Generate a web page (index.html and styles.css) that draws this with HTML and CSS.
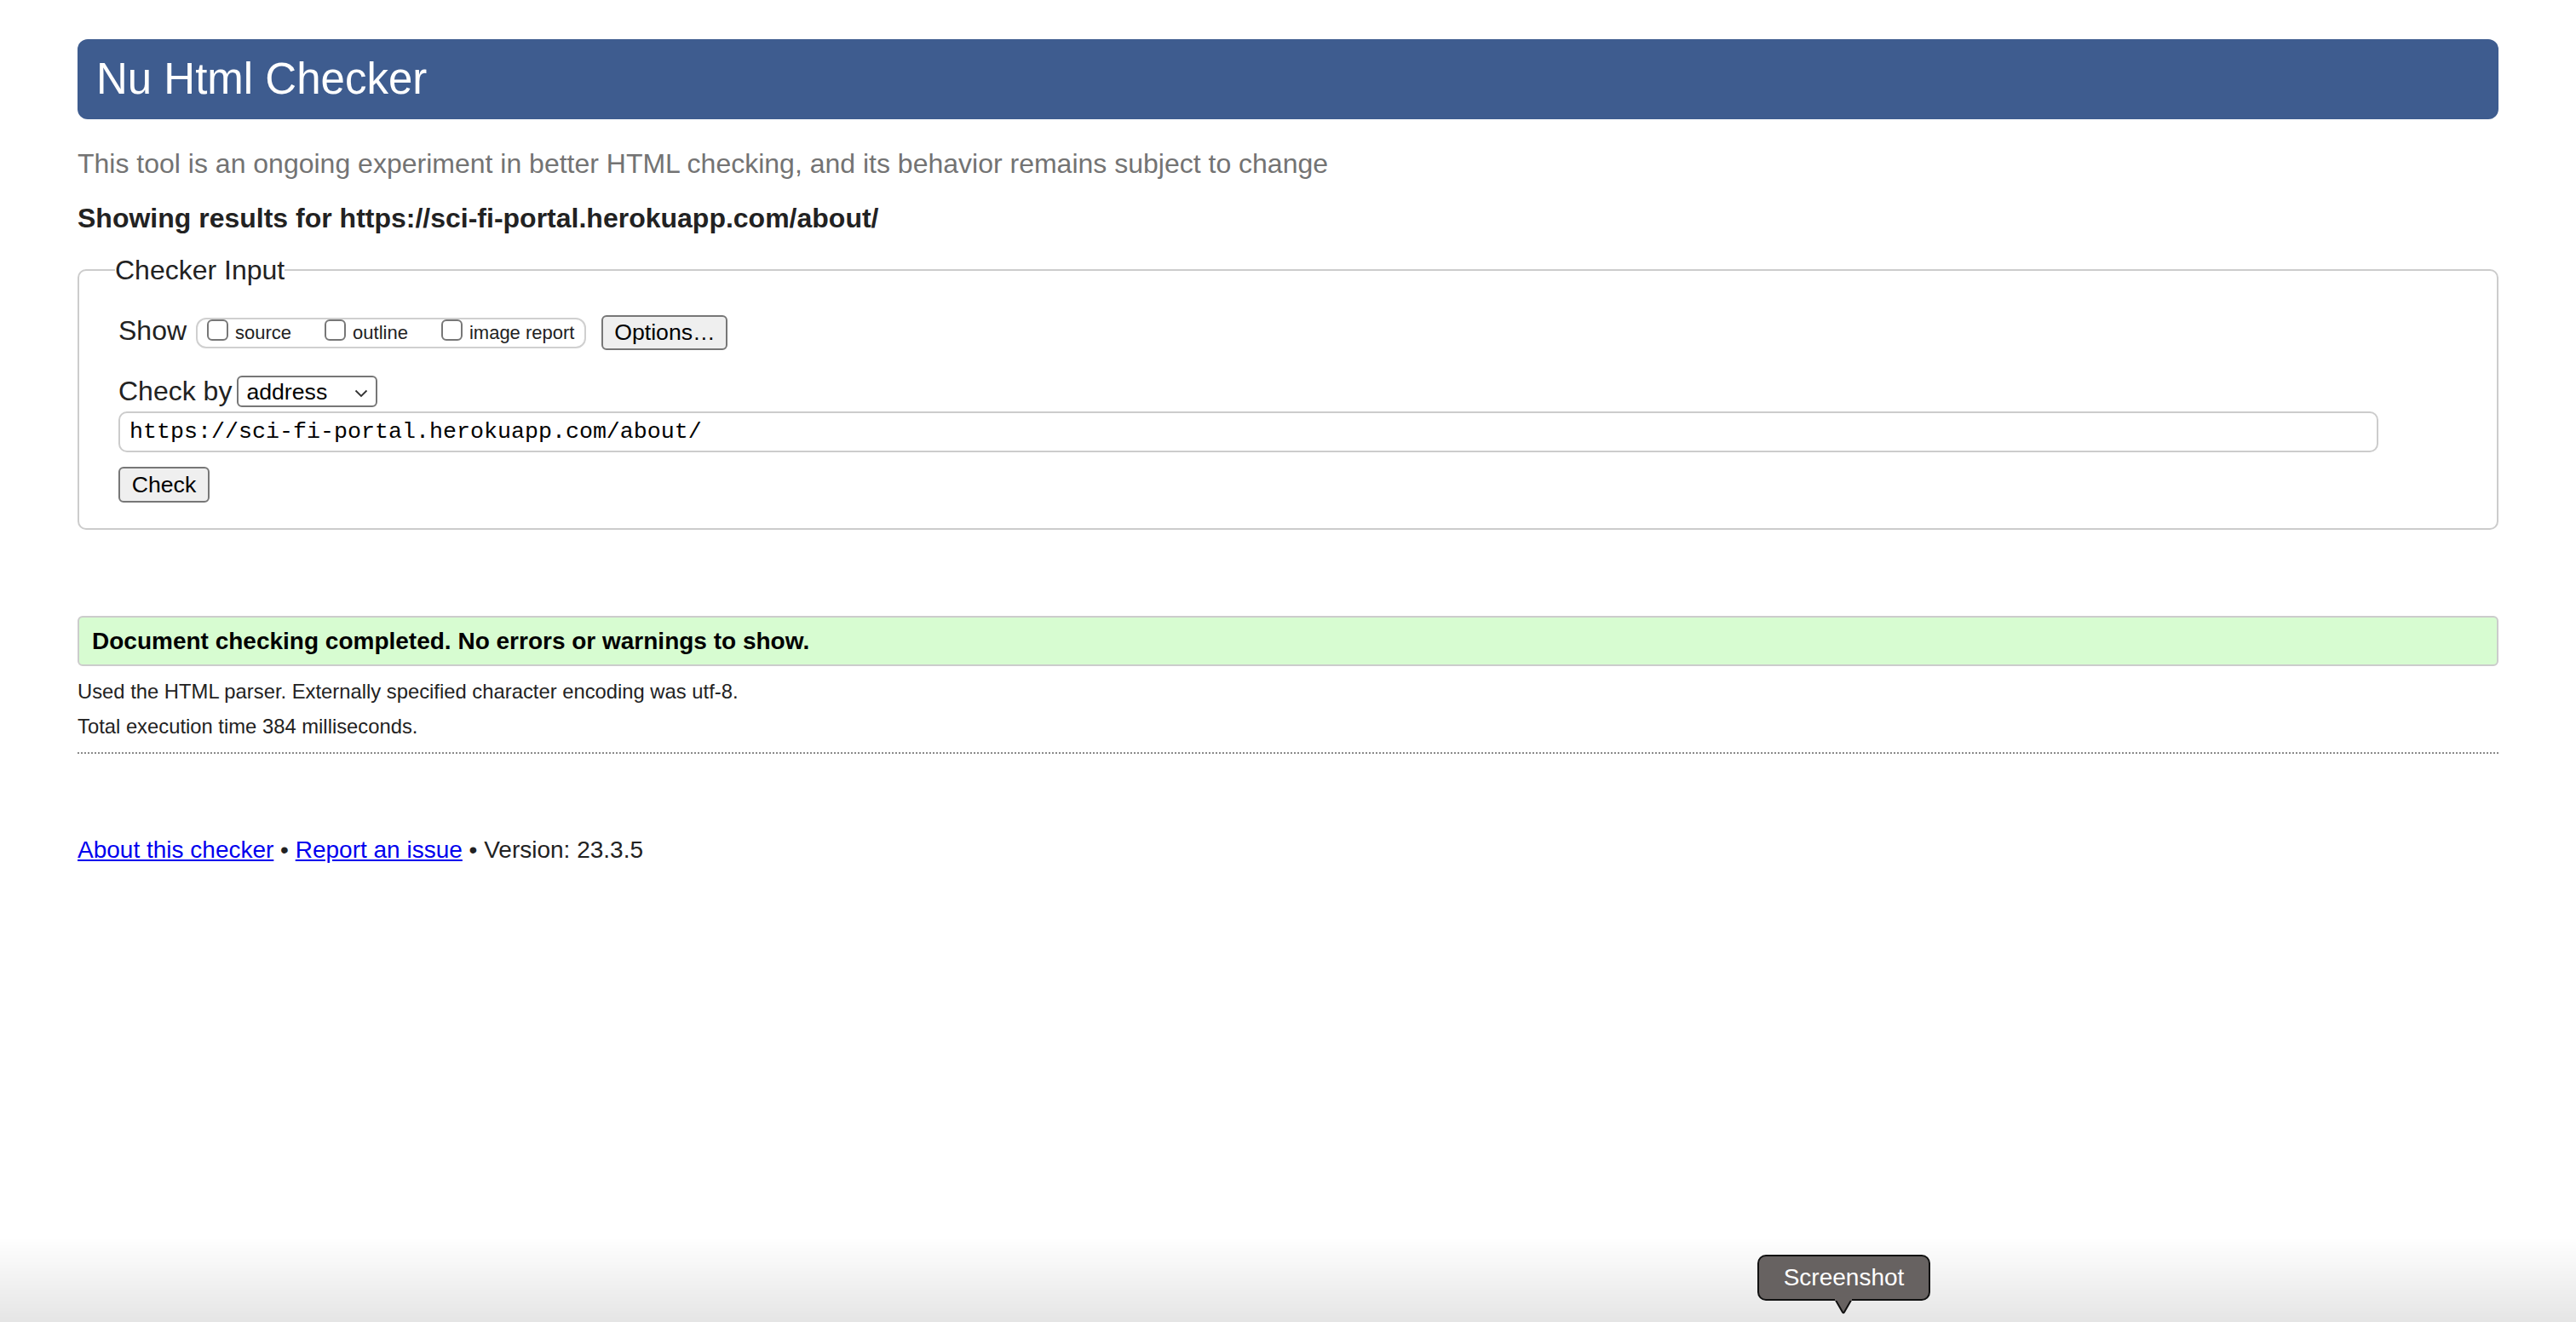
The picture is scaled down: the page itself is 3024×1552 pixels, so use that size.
FILE: index.html
```html
<!DOCTYPE html>
<html lang="en">
<head>
<meta charset="utf-8">
<title>Showing results for https://sci-fi-portal.herokuapp.com/about/ - Nu Html Checker</title>
<link rel="stylesheet" href="styles.css">
</head>
<body>
<h1 class="title">Nu Html Checker</h1>
<p class="intro">This tool is an ongoing experiment in better HTML checking, and its behavior remains subject to change</p>
<p class="showing">Showing results for https://sci-fi-portal.herokuapp.com/about/</p>
<fieldset class="checker">
  <legend class="legend">Checker Input</legend>
  <div class="row show-row">
    <span class="label show-label">Show</span>
    <div class="opts">
      <label class="opt"><span class="cb"></span><span class="opt-text">source</span></label>
      <label class="opt"><span class="cb"></span><span class="opt-text">outline</span></label>
      <label class="opt"><span class="cb"></span><span class="opt-text">image report</span></label>
    </div>
    <span class="btn options-btn">Options…</span>
  </div>
  <div class="row by-row">
    <span class="label by-label">Check by</span>
    <div class="select"><span class="select-text">address</span><svg class="chev" width="16" height="10" viewBox="0 0 16 10"><polyline points="1.5,1.5 8,8 14.5,1.5" fill="none" stroke="#333" stroke-width="1.8"/></svg></div>
  </div>
  <div class="url">https://sci-fi-portal.herokuapp.com/about/</div>
  <div class="btn check-btn">Check</div>
</fieldset>
<div class="success">Document checking completed. No errors or warnings to show.</div>
<p class="meta first">Used the HTML parser. Externally specified character encoding was utf-8.</p>
<p class="meta">Total execution time 384 milliseconds.</p>
<div class="rule"></div>
<p class="footer"><a href="#" class="link">About this checker</a> • <a href="#" class="link">Report an issue</a> • Version: 23.3.5</p>

<div class="shade"></div>
<div class="tooltip">
  <span class="tooltip-text">Screenshot</span>
  <svg class="tooltip-arrow" width="40" height="20" viewBox="0 0 40 20"><path d="M2 1 L13 1 L20 15 L27 1 L38 1" fill="#676261" stroke="none"/><path d="M11 1.5 L19 15.5 Q20 17 21 15.5 L29 1.5" fill="#676261" stroke="#111" stroke-width="2"/><rect x="10" y="0" width="20" height="2" fill="#676261"/></svg>
</div>
</body>
</html>
```

FILE: styles.css
```css
html, body {
  margin: 0;
  background: #ffffff;
}

body {
  padding: 46px 91px 0 91px;
  font-family: "Liberation Sans", Arial, Helvetica, sans-serif;
  color: #222222;
}

.title {
  margin: 0;
  height: 94px;
  line-height: 94px;
  padding: 0 0 0 22px;
  background: #3e5c8f;
  color: #ffffff;
  font-size: 51px;
  font-weight: normal;
  border-radius: 12px;
}

.intro {
  margin: 34px 0 0 0;
  font-size: 32px;
  line-height: 36px;
  color: #737373;
}

.showing {
  margin: 28px 0 0 0;
  font-size: 32px;
  line-height: 36px;
  font-weight: bold;
  color: #222222;
}

.checker {
  margin: 25px 0 0 0;
  padding: 35px 46px 30px 46px;
  border: 2px solid #cccccc;
  border-radius: 10px;
  min-width: 0;
}

.legend {
  padding: 0;
  margin-left: -4px;
  font-size: 32px;
  line-height: 36px;
  color: #222222;
}

.row {
  display: flex;
}

.show-row {
  align-items: center;
  height: 41px;
}

.label {
  font-size: 32px;
  line-height: 36px;
  color: #222222;
}

.show-label {
  margin-bottom: 6px;
  margin-right: 11px;
}

.opts {
  display: flex;
  align-items: center;
  gap: 39px;
  height: 32px;
  padding: 0 12px 0 11px;
  border: 2px solid #d0d0d0;
  border-radius: 12px;
}

.opt {
  display: flex;
  align-items: center;
  gap: 8px;
}

.cb {
  width: 21px;
  height: 21px;
  border: 2px solid #777777;
  border-radius: 6px;
  background: #ffffff;
  margin-bottom: 6px;
}

.opt-text {
  font-size: 22px;
  line-height: 26px;
  color: #222222;
}

.btn {
  display: flex;
  align-items: center;
  justify-content: center;
  box-sizing: border-box;
  background: #efefef;
  border: 2px solid #777777;
  border-radius: 6px;
  font-size: 26.67px;
  color: #000000;
}

.options-btn {
  margin-left: 18px;
  width: 148px;
  height: 41px;
}

.by-row {
  margin-top: 30px;
  align-items: flex-start;
}

.by-label {
  margin-top: 0;
  margin-right: 6px;
}

.select {
  box-sizing: border-box;
  width: 165px;
  height: 37px;
  border: 2px solid #777777;
  border-radius: 6px;
  background: #ffffff;
  display: flex;
  align-items: center;
  justify-content: space-between;
  padding: 0 9px 0 9px;
}

.select-text {
  font-size: 26.67px;
  line-height: 30px;
  color: #000000;
}

.chev {
  display: block;
  margin-top: 4px;
}

.url {
  box-sizing: border-box;
  margin-top: 5px;
  width: 2653px;
  height: 48px;
  border: 2px solid #cccccc;
  border-radius: 10px;
  padding: 0 11px;
  font-family: "Liberation Mono", "DejaVu Sans Mono", monospace;
  font-size: 26.67px;
  line-height: 44px;
  color: #000000;
}

.check-btn {
  margin-top: 17px;
  width: 107px;
  height: 42px;
}

.success {
  margin-top: 101px;
  box-sizing: border-box;
  height: 59px;
  line-height: 55px;
  padding: 0 15px;
  background: #d7fcd1;
  border: 2px solid #cccccc;
  border-radius: 6px;
  font-size: 28px;
  font-weight: bold;
  color: #000000;
}

.meta {
  margin: 0;
  font-size: 23.8px;
  line-height: 41px;
  color: #222222;
}

.meta.first {
  margin-top: 9px;
}

.rule {
  margin-top: 10px;
  border-top: 2px dotted #8a8a8a;
}

.footer {
  margin: 97px 0 0 0;
  font-size: 28px;
  line-height: 32px;
  color: #222222;
}

.link {
  color: #0000ee;
  text-decoration: underline;
}

.shade {
  position: fixed;
  left: 0;
  right: 0;
  bottom: 0;
  height: 100px;
  background: linear-gradient(to bottom, rgba(0, 0, 0, 0), rgba(0, 0, 0, 0.1));
  pointer-events: none;
}

.tooltip {
  position: fixed;
  left: 2063px;
  top: 1473px;
  box-sizing: border-box;
  width: 203px;
  height: 54px;
  background: #676261;
  border: 2px solid #111111;
  border-radius: 10px;
  display: flex;
  align-items: center;
  justify-content: center;
}

.tooltip-text {
  font-family: "Liberation Sans", Arial, sans-serif;
  font-size: 28px;
  color: #ffffff;
}

.tooltip-arrow {
  position: absolute;
  left: 79px;
  top: 50px;
}
```
